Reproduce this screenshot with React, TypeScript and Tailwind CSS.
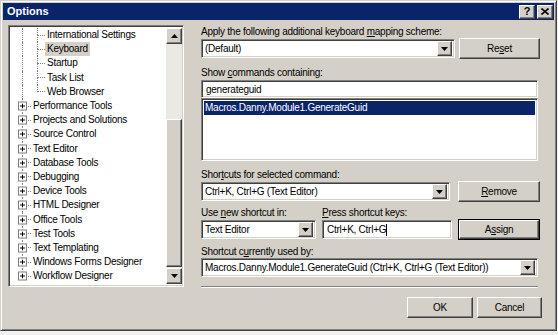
import React from 'react';

const raised =
  'border border-t-white border-l-white border-r-[#404040] border-b-[#404040] shadow-[inset_-1px_-1px_0_#808080] bg-[#d4d0c8]';
const sunken =
  'border border-t-[#808080] border-l-[#808080] border-r-white border-b-white shadow-[inset_1px_1px_0_#404040,inset_-1px_-1px_0_#d4d0c8]';

function Arrow({ down = true }: { down?: boolean }) {
  return (
    <svg width="7" height="4" viewBox="0 0 7 4">
      {down ? <path d="M0 0h7L3.5 4z" fill="#000" /> : <path d="M0 4h7L3.5 0z" fill="#000" />}
    </svg>
  );
}

function Combo({ value, width }: { value: string; width: string }) {
  return (
    <div className={`${sunken} ${width} h-[19px] bg-white flex items-center pl-[3px] pr-[2px]`}>
      <span className="flex-1 truncate">{value}</span>
      <div className={`${raised} w-[15px] h-[15px] flex items-center justify-center`}>
        <Arrow />
      </div>
    </div>
  );
}

function Button({ children, width, isDefault = false }: { children: React.ReactNode; width: string; isDefault?: boolean }) {
  if (isDefault) {
    return (
      <div className={`${width} h-[21px] border border-black`}>
        <div className={`${raised} w-full h-full flex items-center justify-center`}>{children}</div>
      </div>
    );
  }
  return <div className={`${raised} ${width} h-[21px] flex items-center justify-center`}>{children}</div>;
}

type Node = { label: string; level: 1 | 2; last?: boolean; selected?: boolean };

const nodes: Node[] = [
  { label: 'International Settings', level: 2 },
  { label: 'Keyboard', level: 2, selected: true },
  { label: 'Startup', level: 2 },
  { label: 'Task List', level: 2 },
  { label: 'Web Browser', level: 2, last: true },
  { label: 'Performance Tools', level: 1 },
  { label: 'Projects and Solutions', level: 1 },
  { label: 'Source Control', level: 1 },
  { label: 'Text Editor', level: 1 },
  { label: 'Database Tools', level: 1 },
  { label: 'Debugging', level: 1 },
  { label: 'Device Tools', level: 1 },
  { label: 'HTML Designer', level: 1 },
  { label: 'Office Tools', level: 1 },
  { label: 'Test Tools', level: 1 },
  { label: 'Text Templating', level: 1 },
  { label: 'Windows Forms Designer', level: 1 },
  { label: 'Workflow Designer', level: 1, last: true },
];

function PlusBox() {
  return (
    <div className="absolute left-[7px] top-1/2 -translate-y-1/2 w-[9px] h-[9px] border border-[#808080] bg-white flex items-center justify-center">
      <svg width="5" height="5" viewBox="0 0 5 5">
        <path d="M0 2.5h5M2.5 0v5" stroke="#000" strokeWidth="1" />
      </svg>
    </div>
  );
}

function TreeRow({ node }: { node: Node }) {
  return (
    <div className="h-[14.2px] flex items-stretch">
      {node.level === 1 ? (
        <div className="relative w-[20px] flex">
          <div className="w-[12px] flex flex-col">
            <div className="flex-1 border-r border-dotted border-[#808080]" />
            <div className={`flex-1 ${node.last ? '' : 'border-r border-dotted border-[#808080]'}`} />
          </div>
          <div className="flex-1 flex items-center">
            <div className="w-full border-t border-dotted border-[#808080]" />
          </div>
          <PlusBox />
        </div>
      ) : (
        <>
          <div className="w-[16px] flex">
            <div className="w-[12px] border-r border-dotted border-[#808080]" />
          </div>
          <div className="w-[18px] flex">
            <div className="w-[11px] flex flex-col">
              <div className="flex-1 border-r border-dotted border-[#808080]" />
              <div className={`flex-1 ${node.last ? '' : 'border-r border-dotted border-[#808080]'}`} />
            </div>
            <div className="flex-1 flex items-center">
              <div className="w-full border-t border-dotted border-[#808080]" />
            </div>
          </div>
        </>
      )}
      <div className="flex items-center">
        <span className={`px-[2px] leading-[14px] ${node.selected ? 'bg-[#d4d0c8]' : ''}`}>{node.label}</span>
      </div>
    </div>
  );
}

function Tree() {
  return (
    <div className={`${sunken} w-[176px] h-[262px] bg-white flex p-[2px] pr-[1px]`}>
      <div className="flex-1 overflow-hidden">
        {nodes.map((n) => (
          <TreeRow key={n.label} node={n} />
        ))}
      </div>
      <div className="w-[16px] flex flex-col bg-[#ebe9e4]">
        <div className={`${raised} h-[16px] flex items-center justify-center`}>
          <Arrow down={false} />
        </div>
        <div className="h-[75px]" />
        <div className={`${raised} flex-1`} />
        <div className="h-[1px]" />
        <div className={`${raised} h-[16px] flex items-center justify-center`}>
          <Arrow />
        </div>
      </div>
    </div>
  );
}

function Label({ children, className = '' }: { children: React.ReactNode; className?: string }) {
  return <div className={`h-[12px] leading-[12px] ${className}`}>{children}</div>;
}

export default function App() {
  return (
    <div className="w-[558px] h-[335px] bg-[#f2f2f2] font-['Liberation_Sans',Arial,sans-serif] text-[10px] tracking-[-0.25px] text-black">
      <div className="w-[557px] h-[331px] bg-[#d4d0c8] border border-t-[#d4d0c8] border-l-[#d4d0c8] border-r-[#404040] border-b-[#404040] shadow-[inset_1px_1px_0_#fff,inset_-1px_-1px_0_#808080] p-[2px] flex flex-col">
        {/* title bar */}
        <div className="h-[17px] bg-[#0a246a] flex items-center pl-[4px] pr-[1px]">
          <span className="flex-1 text-white font-bold text-[11px] tracking-normal">Options</span>
          <div className="flex gap-[2px]">
            <div className={`${raised} w-[16px] h-[14px] flex items-center justify-center font-bold text-[11px] leading-none`}>?</div>
            <div className={`${raised} w-[16px] h-[14px] flex items-center justify-center`}>
              <svg width="8" height="7" viewBox="0 0 8 7">
                <path d="M0.5 0.5l7 6M7.5 0.5l-7 6" stroke="#000" strokeWidth="1.6" />
              </svg>
            </div>
          </div>
        </div>

        {/* body */}
        <div className="flex pl-[5px] pt-[5px] gap-[17px]">
          <Tree />
          <div className="w-[341px] flex flex-col">
            <Label className="h-[13px] leading-[13px]">
              Apply the following additional keyboard <u>m</u>apping scheme:
            </Label>
            <div className="h-[21px] flex items-center gap-[4px]">
              <Combo value="(Default)" width="w-[254px]" />
              <Button width="w-[81px]">
                Re<u>s</u>et
              </Button>
            </div>
            <Label className="mt-[7px] h-[13px] leading-[13px]">
              Show <u>c</u>ommands containing:
            </Label>
            <div className={`${sunken} w-[337px] h-[18px] bg-white flex items-center pl-[4px] mt-[1px]`}>generateguid</div>
            <div className={`${sunken} w-[337px] h-[63px] bg-white p-[2px]`}>
              <div className="h-[14px] bg-[#0a246a] text-white leading-[14px] pl-[1px]">Macros.Danny.Module1.GenerateGuid</div>
            </div>
            <Label className="mt-[8px]">
              Shor<u>t</u>cuts for selected command:
            </Label>
            <div className="h-[21px] flex items-center gap-[8px]">
              <Combo value="Ctrl+K, Ctrl+G (Text Editor)" width="w-[249px]" />
              <Button width="w-[82px]">
                <u>R</u>emove
              </Button>
            </div>
            <div className="flex mt-[5px]">
              <Label className="w-[121px]">
                Use <u>n</u>ew shortcut in:
              </Label>
              <Label>
                <u>P</u>ress shortcut keys:
              </Label>
            </div>
            <div className="h-[21px] flex items-center">
              <Combo value="Text Editor" width="w-[115px]" />
              <div className={`${sunken} ml-[6px] w-[130px] h-[19px] bg-white flex items-center pl-[4px]`}>
                Ctrl+K, Ctrl+G<span className="inline-block w-[1px] h-[12px] bg-black" />
              </div>
              <div className="ml-[6px]">
                <Button width="w-[82px]" isDefault>
                  A<u>s</u>sign
                </Button>
              </div>
            </div>
            <Label className="mt-[6px]">
              Shortcut c<u>u</u>rrently used by:
            </Label>
            <Combo value="Macros.Danny.Module1.GenerateGuid (Ctrl+K, Ctrl+G (Text Editor))" width="w-[337px]" />
            <div className="mt-[9px] w-[337px] border-t border-t-[#808080] border-b border-b-white" />
            <div className="mt-[9px] flex justify-end gap-[4px]">
              <Button width="w-[66px]">OK</Button>
              <Button width="w-[65px]">Cancel</Button>
            </div>
          </div>
        </div>
      </div>
    </div>
  );
}
